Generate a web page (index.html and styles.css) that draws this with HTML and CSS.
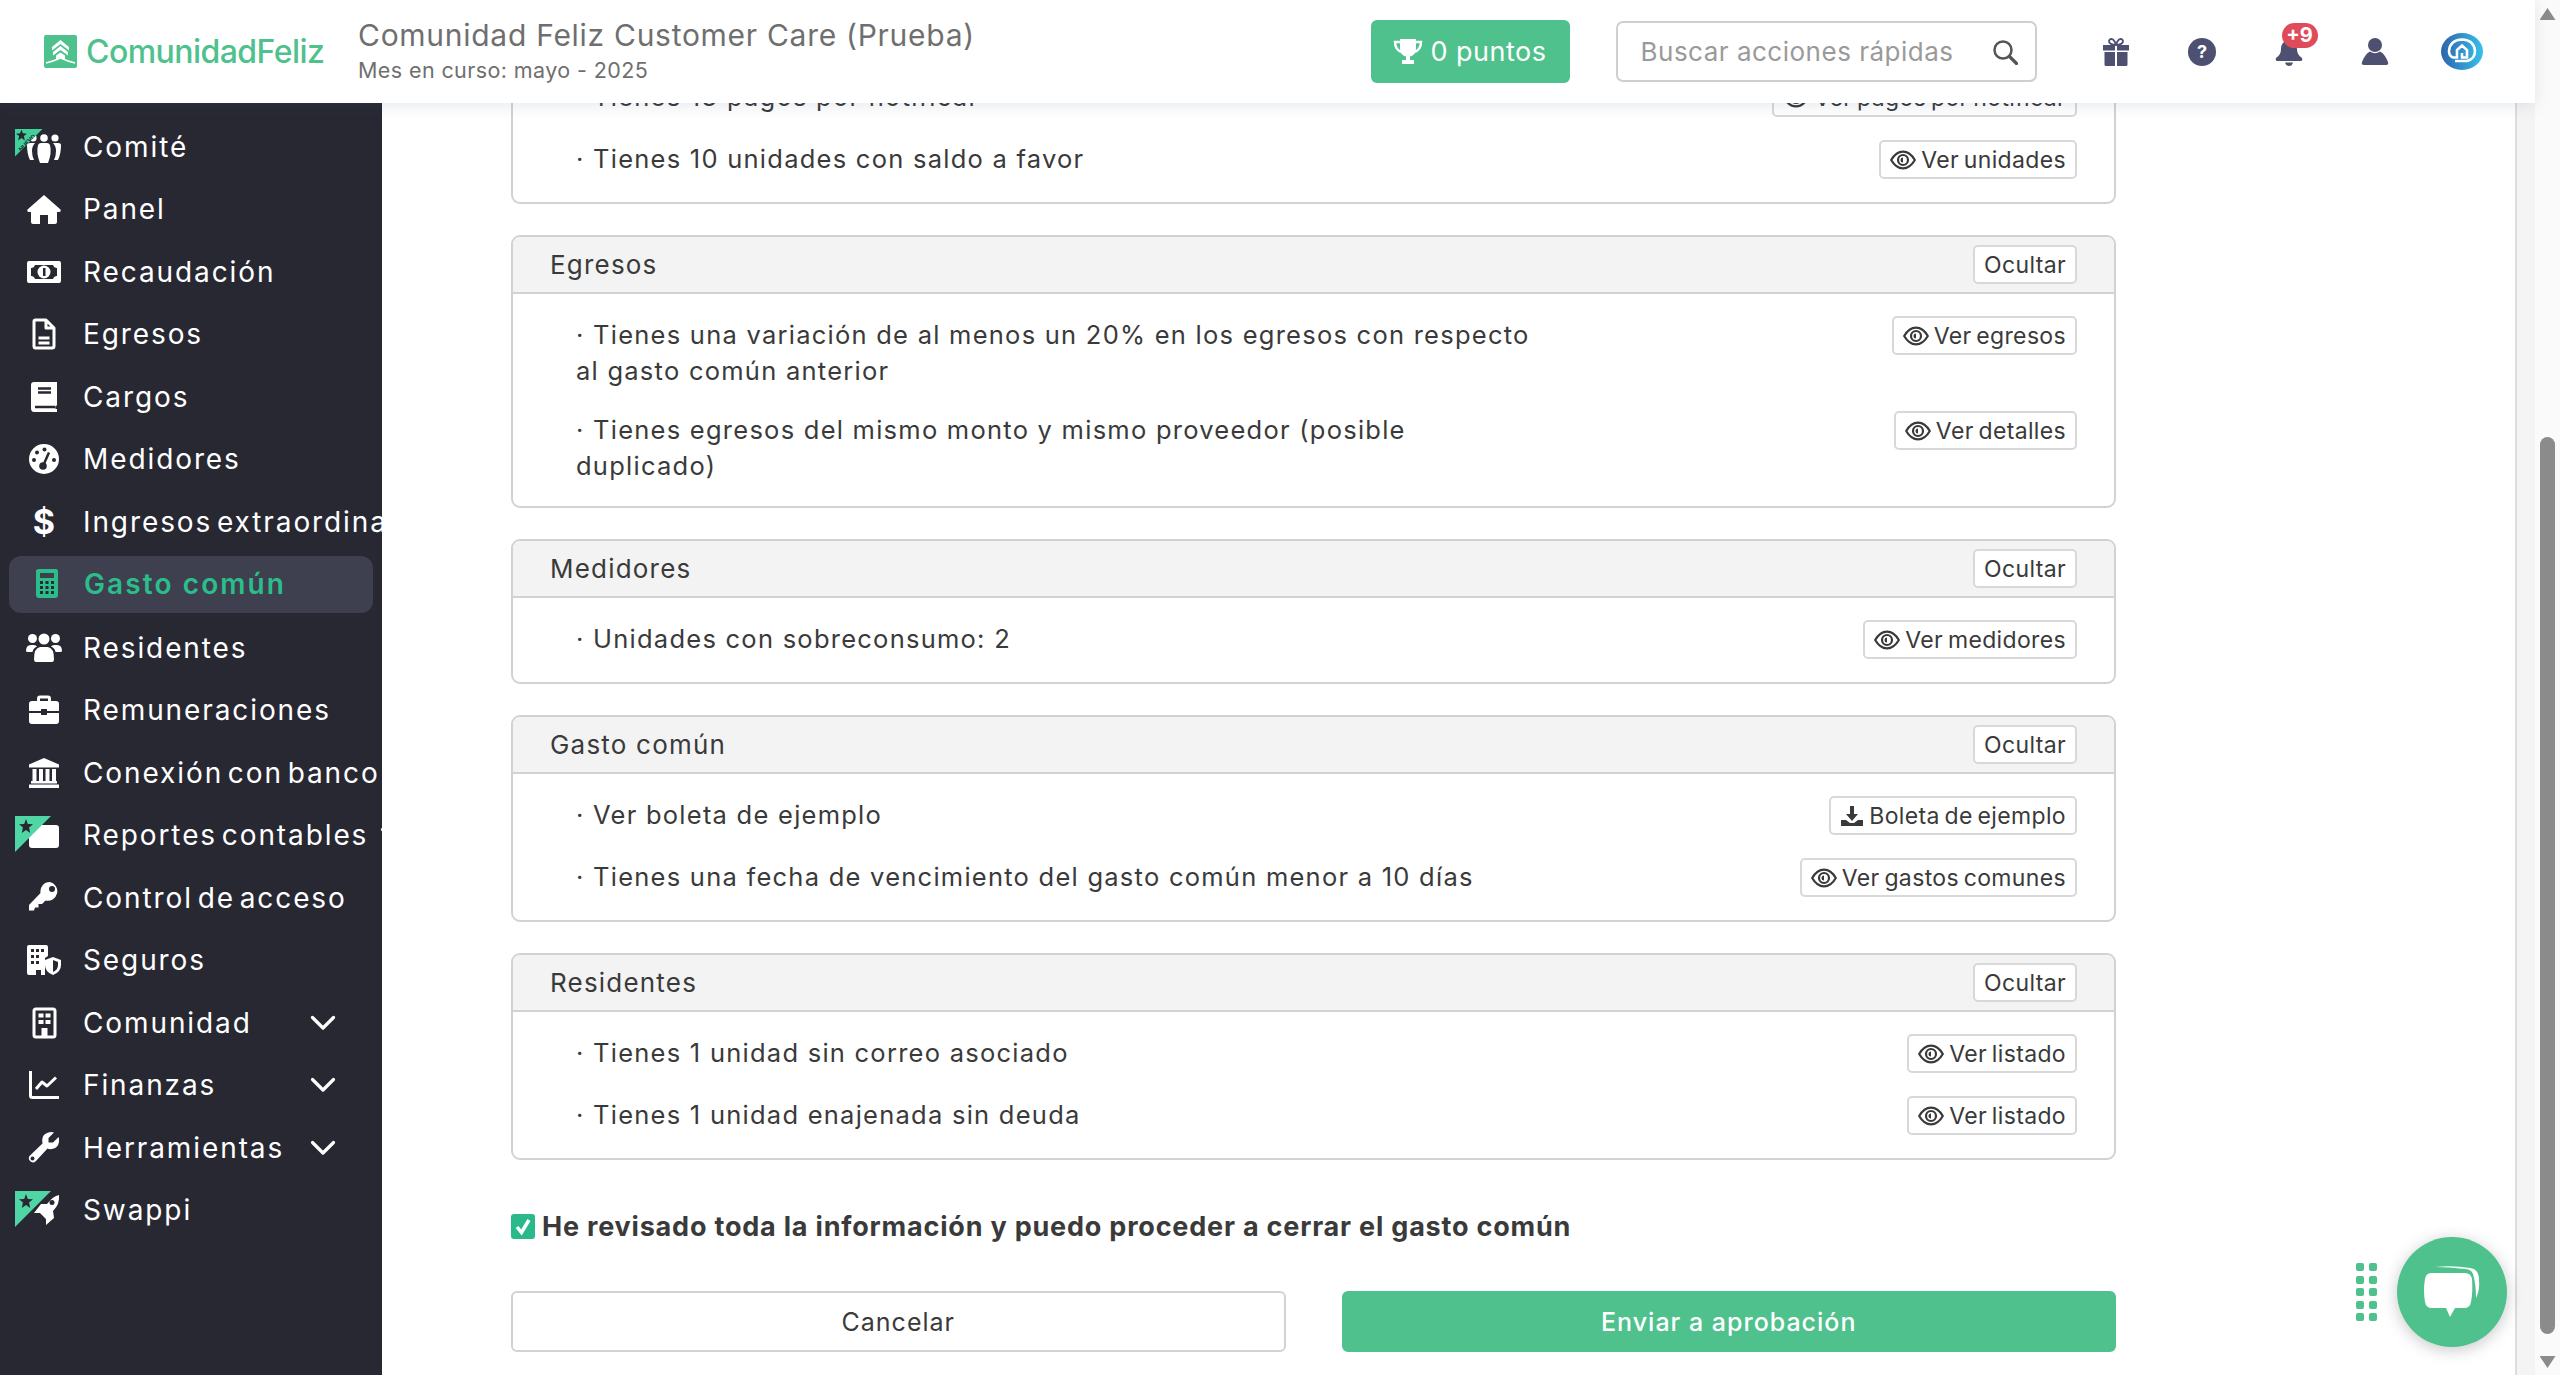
FILE: index.html
```html
<!DOCTYPE html>
<html lang="es">
<head>
<meta charset="utf-8">
<title>Comunidad Feliz</title>
<link rel="stylesheet" href="styles.css">
</head>
<body>
<svg class="defs" width="0" height="0" aria-hidden="true">
  <symbol id="i-comite" viewBox="0 0 36 32">
    <circle cx="7" cy="7" r="3.6"/><circle cx="18" cy="7" r="3.8"/><circle cx="29" cy="7" r="3.6"/>
    <path d="M1 14q0-2 3-2h5q-3 3-3 8 0 5 2 9H4q-3-6-3-15zM35 14q0-2-3-2h-5q3 3 3 8 0 5-2 9h4q3-6 3-15z"/>
    <path d="M12 14q1-2 3-2h6q2 0 3 2 2 8-2 18h-8q-4-10-2-18z"/>
  </symbol>
  <symbol id="i-home" viewBox="0 0 36 32">
    <path d="M18 2L34.500 16.500Q35.500 18.500 33 19H31V29Q31 31 29 31H22V22H14V31H7Q5 31 5 29V19H3Q.5 18.500 1.500 16.500Z"/>
  </symbol>
  <symbol id="i-money" viewBox="0 0 36 32">
    <path fill-rule="evenodd" d="M3 5H33Q35 5 35 7V25Q35 27 33 27H3Q1 27 1 25V7Q1 5 3 5ZM9 9Q8 12 5 12V20Q8 20 9 23H27Q28 20 31 20V12Q28 12 27 9Z"/>
    <circle cx="18" cy="16" r="6.500"/><rect class="dk" x="17" y="12" width="2.500" height="8"/>
  </symbol>
  <symbol id="i-file" viewBox="0 0 36 32">
    <path class="ln" d="M9.500 2H20L28 10V28Q28 30 26 30H9.500Q8 30 8 28V3.500Q8 2 9.500 2ZM20 2.500V10H27.500M12.500 20H23.500M12.500 25H23.500"/>
  </symbol>
  <symbol id="i-book" viewBox="0 0 36 32">
    <path d="M8 1H31V24Q30 25 29.500 26V28H31V31H8Q5 31 5 27V4Q5 1 8 1Z"/>
    <path class="dkln" d="M12 7.500H25M12 11.500H25M9 26H29.500"/>
  </symbol>
  <symbol id="i-gauge" viewBox="0 0 36 32">
    <circle cx="18" cy="16" r="15"/>
    <circle class="dk" cx="8" cy="17" r="2"/><circle class="dk" cx="11" cy="9.500" r="2"/><circle class="dk" cx="18.500" cy="6.500" r="2"/><circle class="dk" cx="28" cy="17" r="2"/>
    <circle class="dk" cx="17" cy="23" r="3.800"/><path class="dkln" d="M17 23L23 9.500"/>
  </symbol>
  <symbol id="i-calc" viewBox="0 0 36 32">
    <path fill-rule="evenodd" d="M12 1H29Q31 1 31 3V27Q31 30 28 30H12Q9 30 9 27V3Q9 1 12 1ZM13 5V10H27V5Z"/>
    <g class="dk"><rect x="13" y="13" width="3" height="3"/><rect x="18.500" y="13" width="3" height="3"/><rect x="24" y="13" width="3" height="3"/><rect x="13" y="18" width="3" height="3"/><rect x="18.500" y="18" width="3" height="3"/><rect x="24" y="18" width="3" height="3"/><rect x="13" y="23" width="3" height="3"/><rect x="18.500" y="23" width="3" height="3"/><rect x="24" y="23" width="3" height="3"/></g>
  </symbol>
  <symbol id="i-users" viewBox="0 0 36 32">
    <circle cx="6.500" cy="6.500" r="4.500"/><circle cx="29.500" cy="6.500" r="4.500"/><circle cx="18" cy="7" r="5.500"/>
    <path d="M0 19Q0 13 5 13H8Q10 13 11 14.500Q7 16 6.500 20H2Q0 20 0 19ZM36 19Q36 13 31 13H28Q26 13 25 14.500Q29 16 29.500 20H34Q36 20 36 19Z"/>
    <path d="M8 27Q8 16 14 15H22Q28 16 28 27Q28 30 26 30H10Q8 30 8 27Z"/>
  </symbol>
  <symbol id="i-case" viewBox="0 0 36 32">
    <path class="ln" d="M12.500 7V4.500Q12.500 3 14 3H22Q23.500 3 23.500 4.500V7"/>
    <path d="M6 7H30Q33 7 33 10V17H21V15H15V17H3V10Q3 7 6 7ZM3 19H15V21H21V19H33V27Q33 30 30 30H6Q3 30 3 27Z"/>
  </symbol>
  <symbol id="i-bank" viewBox="0 0 36 32">
    <path d="M18 1L33 7.500V10.500H3V7.500Z"/><rect x="6.500" y="12" width="4" height="12"/><rect x="13" y="12" width="4" height="12"/><rect x="19.500" y="12" width="4" height="12"/><rect x="26" y="12" width="4" height="12"/><rect x="5" y="24" width="26" height="2.500"/><rect x="3" y="27.500" width="30" height="3.500"/>
  </symbol>
  <symbol id="i-folder" viewBox="0 0 36 32">
    <rect x="3" y="6" width="30" height="23" rx="3"/>
  </symbol>
  <symbol id="i-key" viewBox="0 0 36 32">
    <path fill-rule="evenodd" d="M24 0A9.500 9.500 0 1 1 19.500 18.500L16 22H12.500V25.500H9L8 28.500H3V23L14.500 11A9.500 9.500 0 0 1 24 0ZM26 4A3 3 0 1 0 26 10 3 3 0 0 0 26 4Z"/>
  </symbol>
  <symbol id="i-shield" viewBox="0 0 36 32">
    <path d="M3 1H20Q22 1 22 3V12L19 14V31H15V26H10V31H3Q1 31 1 29V3Q1 1 3 1Z"/>
    <g class="dk"><rect x="5" y="5" width="3" height="3"/><rect x="10" y="5" width="3" height="3"/><rect x="15" y="5" width="3" height="3"/><rect x="5" y="11" width="3" height="3"/><rect x="10" y="11" width="3" height="3"/><rect x="5" y="17" width="3" height="3"/><rect x="10" y="17" width="3" height="3"/></g>
    <path d="M27 13L35 16V21Q35 28 27 31Q19 28 19 21V16Z"/><path class="dk" d="M27 16L32 18V21Q32 26 27 28Z"/>
  </symbol>
  <symbol id="i-building" viewBox="0 0 36 32">
    <rect class="ln" x="8" y="2" width="21" height="28" rx="2"/>
    <rect x="12.500" y="6.500" width="5" height="4"/><rect x="19.500" y="6.500" width="5" height="4"/><rect x="12.500" y="13" width="5" height="4"/><rect x="19.500" y="13" width="5" height="4"/><rect x="15.500" y="21" width="6" height="9"/>
  </symbol>
  <symbol id="i-chart" viewBox="0 0 36 32">
    <path class="ln" d="M4.500 2V26.500Q4.500 28.500 6.500 28.500H33"/><path class="ln" d="M10 20L16 13L21 17L30 8.500"/>
  </symbol>
  <symbol id="i-wrench" viewBox="0 0 36 32">
    <path fill-rule="evenodd" d="M25 0Q27 0 28 .5L22.500 6V10.500H27L32.500 5Q33.500 7 33 10Q32 16 26 17Q23 17.500 21.500 16.500L9.500 29.500Q6.500 31.500 4 29Q1.500 26 4 23.500L16.500 11.500Q15 4 20 1.500Q22 0 25 0ZM6.500 24.500A2 2 0 1 0 6.500 28.500 2 2 0 0 0 6.500 24.500Z"/>
  </symbol>
  <symbol id="i-rocket" viewBox="0 0 36 32">
    <path fill-rule="evenodd" d="M33 1Q34 10 27 17L28 24L20 31L20 25L14 19L8 19L15 10L21 10Q27 2 33 1ZM26 6A2.500 2.500 0 1 0 26 11 2.500 2.500 0 0 0 26 6Z"/>
  </symbol>
  <symbol id="i-eye" viewBox="0 0 26 20">
    <path d="M1.200 10Q6 1.600 13 1.600T24.800 10Q20 18.400 13 18.400T1.200 10Z" fill="none" stroke="currentColor" stroke-width="2.200"/>
    <circle cx="13" cy="10" r="5" fill="none" stroke="currentColor" stroke-width="2.200"/>
    <path d="M13 7.500A2.500 2.500 0 0 0 13 12.500Z" fill="currentColor"/>
  </symbol>
  <symbol id="i-chev" viewBox="0 0 26 16">
    <path d="M2.500 2.500L13 13L23.500 2.500" fill="none" stroke="currentColor" stroke-width="3.200" stroke-linecap="round" stroke-linejoin="round"/>
  </symbol>
</svg>

<div class="app">
  <div class="window">
    <header class="topbar">
      <div class="logo">
        <svg class="logo-mark" viewBox="0 0 33 33"><rect width="33" height="33" rx="2" fill="#4fc18d"/><path d="M16.500 5L25 12V15.500L16.500 9L8 15.500V12Z" fill="#fff"/><path d="M16.500 11L24 17V20.500L16.500 15L9 20.500V17Z" fill="#fff"/><path d="M12 20.500L16.500 17.500L21 20.500V24H12Z" fill="#fff"/><path d="M2 28Q10 26 16.500 23Q23 26 31 28" fill="none" stroke="#fff" stroke-width="1.400"/></svg>
        <span class="logo-text">ComunidadFeliz</span>
      </div>
      <div class="heading">
        <div class="heading-title">Comunidad Feliz Customer Care (Prueba)</div>
        <div class="heading-sub">Mes en curso: mayo - 2025</div>
      </div>
      <button class="points">
        <svg class="trophy" viewBox="0 0 30 28"><path d="M7 1H23V10Q23 17 17 18.500V22H21V26H9V22H13V18.500Q7 17 7 10Z" fill="#fff"/><path d="M7 4H2Q2 12 9 14M23 4H28Q28 12 21 14" fill="none" stroke="#fff" stroke-width="2.400"/></svg>
        <span>0 puntos</span>
      </button>
      <label class="search">
        <span class="search-text">Buscar acciones rápidas</span>
        <svg class="search-icon" viewBox="0 0 26 26"><circle cx="11" cy="11" r="8.500" fill="none" stroke="#555" stroke-width="2.500"/><path d="M17.500 17.500L24.500 24.500" stroke="#555" stroke-width="3.200" stroke-linecap="round"/></svg>
      </label>
      <div class="tools">
        <div class="tool"><svg class="tool-icon" viewBox="0 0 28 28"><path d="M1 7H13V12.500H1ZM15 7H27V12.500H15ZM2.500 14H13V28H4Q2.500 28 2.500 26.500ZM15 14H25.500V26.500Q25.500 28 24 28H15Z"/><path d="M14 7Q7 6.500 7 3Q8 0 11 1.500Q13 3 14 7Q15 3 17 1.500Q20 0 21 3Q21 6.500 14 7Z" fill="none" stroke="#4d5070" stroke-width="1.800"/></svg></div>
        <div class="tool"><svg class="tool-icon" viewBox="0 0 28 28"><circle cx="14" cy="14" r="14"/><text class="q" x="14" y="20" text-anchor="middle">?</text></svg></div>
        <div class="tool bell">
          <svg class="tool-icon" viewBox="0 0 28 28"><path d="M14 2Q22 3 22 11Q22 17 27 20Q28 23 25.500 23H2.500Q0 23 1 20Q6 17 6 11Q6 3 14 2Z"/><path d="M10 24.500H18Q17 28 14 28T10 24.500Z"/></svg>
          <span class="badge">+9</span>
        </div>
        <div class="tool"><svg class="tool-icon" viewBox="0 0 28 28"><circle cx="14" cy="7" r="7"/><path d="M9 13.500Q14 17 19 13.500Q24 16 27 24Q28 27 25 27H3Q0 27 1 24Q4 16 9 13.500Z"/></svg></div>
        <div class="tool"><svg class="brand" viewBox="0 0 42 37"><defs><linearGradient id="bg" x1="0" x2="1" y1="0" y2="0"><stop offset="0" stop-color="#2e63ae"/><stop offset="1" stop-color="#35c1ea"/></linearGradient></defs><ellipse cx="21" cy="18.500" rx="21" ry="18.500" fill="url(#bg)"/><path d="M14 28H26Q34 26 34 18Q33 7 21 6.500Q9 7 8 18Q8 23 12 24.500H16V17L21 12.500L26 17V24.500H21V20" fill="none" stroke="#fff" stroke-width="2.600"/></svg></div>
      </div>
    </header>

    <div class="workspace">
      <nav class="sidebar">
        <a class="nav-item"><span class="nav-icon"><svg><use href="#i-comite"/></svg><span class="ribbon ribbon-sm"><i>NUEVO</i></span></span><span class="nav-label">Comité</span></a>
        <a class="nav-item"><span class="nav-icon"><svg><use href="#i-home"/></svg></span><span class="nav-label">Panel</span></a>
        <a class="nav-item"><span class="nav-icon"><svg><use href="#i-money"/></svg></span><span class="nav-label">Recaudación</span></a>
        <a class="nav-item"><span class="nav-icon"><svg><use href="#i-file"/></svg></span><span class="nav-label">Egresos</span></a>
        <a class="nav-item"><span class="nav-icon"><svg><use href="#i-book"/></svg></span><span class="nav-label">Cargos</span></a>
        <a class="nav-item"><span class="nav-icon"><svg><use href="#i-gauge"/></svg></span><span class="nav-label">Medidores</span></a>
        <a class="nav-item"><span class="nav-icon nav-dollar">$</span><span class="nav-label">Ingresos extraordinarios</span></a>
        <a class="nav-item active"><span class="nav-icon"><svg><use href="#i-calc"/></svg></span><span class="nav-label">Gasto común</span></a>
        <a class="nav-item"><span class="nav-icon"><svg><use href="#i-users"/></svg></span><span class="nav-label">Residentes</span></a>
        <a class="nav-item"><span class="nav-icon"><svg><use href="#i-case"/></svg></span><span class="nav-label">Remuneraciones</span></a>
        <a class="nav-item"><span class="nav-icon"><svg><use href="#i-bank"/></svg></span><span class="nav-label">Conexión con banco</span></a>
        <a class="nav-item"><span class="nav-icon"><svg><use href="#i-folder"/></svg><span class="ribbon"></span></span><span class="nav-label">Reportes contables</span><svg class="chev chev-tight"><use href="#i-chev"/></svg></a>
        <a class="nav-item"><span class="nav-icon"><svg><use href="#i-key"/></svg></span><span class="nav-label">Control de acceso</span></a>
        <a class="nav-item"><span class="nav-icon"><svg><use href="#i-shield"/></svg></span><span class="nav-label">Seguros</span></a>
        <a class="nav-item"><span class="nav-icon"><svg><use href="#i-building"/></svg></span><span class="nav-label">Comunidad</span><svg class="chev"><use href="#i-chev"/></svg></a>
        <a class="nav-item"><span class="nav-icon"><svg><use href="#i-chart"/></svg></span><span class="nav-label">Finanzas</span><svg class="chev"><use href="#i-chev"/></svg></a>
        <a class="nav-item"><span class="nav-icon"><svg><use href="#i-wrench"/></svg></span><span class="nav-label">Herramientas</span><svg class="chev"><use href="#i-chev"/></svg></a>
        <a class="nav-item"><span class="nav-icon"><svg><use href="#i-rocket"/></svg><span class="ribbon"></span></span><span class="nav-label">Swappi</span></a>
      </nav>

      <main class="main">
        <div class="content">
          <section class="card card-cut">
            <div class="card-body">
              <div class="row"><p class="row-text">· Tienes 13 pagos por notificar</p><button class="btn"><svg class="eye"><use href="#i-eye"/></svg>Ver pagos por notificar</button></div>
              <div class="row"><p class="row-text">· Tienes 10 unidades con saldo a favor</p><button class="btn"><svg class="eye"><use href="#i-eye"/></svg>Ver unidades</button></div>
            </div>
          </section>

          <section class="card">
            <div class="card-head"><h3>Egresos</h3><button class="btn">Ocultar</button></div>
            <div class="card-body">
              <div class="row"><p class="row-text">· Tienes una variación de al menos un 20% en los egresos con respecto<br>al gasto común anterior</p><button class="btn"><svg class="eye"><use href="#i-eye"/></svg>Ver egresos</button></div>
              <div class="row"><p class="row-text">· Tienes egresos del mismo monto y mismo proveedor (posible<br>duplicado)</p><button class="btn"><svg class="eye"><use href="#i-eye"/></svg>Ver detalles</button></div>
            </div>
          </section>

          <section class="card">
            <div class="card-head"><h3>Medidores</h3><button class="btn">Ocultar</button></div>
            <div class="card-body">
              <div class="row"><p class="row-text">· Unidades con sobreconsumo: 2</p><button class="btn"><svg class="eye"><use href="#i-eye"/></svg>Ver medidores</button></div>
            </div>
          </section>

          <section class="card">
            <div class="card-head"><h3>Gasto común</h3><button class="btn">Ocultar</button></div>
            <div class="card-body">
              <div class="row"><p class="row-text">· Ver boleta de ejemplo</p><button class="btn"><svg class="dl" viewBox="0 0 24 22"><path d="M10 1H14V9H18L12 16L6 9H10Z" fill="currentColor"/><path d="M1 15H6L10 18H14L18 15H23V21H1Z" fill="currentColor"/></svg>Boleta de ejemplo</button></div>
              <div class="row"><p class="row-text">· Tienes una fecha de vencimiento del gasto común menor a 10 días</p><button class="btn"><svg class="eye"><use href="#i-eye"/></svg>Ver gastos comunes</button></div>
            </div>
          </section>

          <section class="card">
            <div class="card-head"><h3>Residentes</h3><button class="btn">Ocultar</button></div>
            <div class="card-body">
              <div class="row"><p class="row-text">· Tienes 1 unidad sin correo asociado</p><button class="btn"><svg class="eye"><use href="#i-eye"/></svg>Ver listado</button></div>
              <div class="row"><p class="row-text">· Tienes 1 unidad enajenada sin deuda</p><button class="btn"><svg class="eye"><use href="#i-eye"/></svg>Ver listado</button></div>
            </div>
          </section>

          <label class="confirm">
            <span class="check"><svg viewBox="0 0 24 24"><path d="M6 12.500L10.500 18L18 5.500" fill="none" stroke="#fff" stroke-width="3.500"/></svg></span>
            <span class="confirm-text">He revisado toda la información y puedo proceder a cerrar el gasto común</span>
          </label>

          <div class="actions">
            <button class="action">Cancelar</button>
            <button class="action action-primary">Enviar a aprobación</button>
          </div>
        </div>
      </main>
      <div class="rail"></div>
    </div>

    <div class="chat">
      <div class="grip"><i></i><i></i><i></i><i></i><i></i><i></i><i></i><i></i><i></i><i></i></div>
      <div class="chat-button">
        <svg viewBox="0 0 58 56"><path d="M12 3Q30 1 47 4Q56 5 56 16Q57 26 53 34Q53 20 50 10Q48 5 42 5Q26 3 12 3Z" fill="#fff"/><path d="M8 9H42Q48 9 49 15Q50 28 48 38Q47 44 41 44H32L27 53L23 44H9Q3 44 2 38Q0 26 2 15Q3 9 8 9Z" fill="#fff"/></svg>
      </div>
    </div>
  </div>

  <aside class="scrollbar">
    <span class="arrow arrow-up"></span>
    <span class="thumb"></span>
    <span class="arrow arrow-down"></span>
  </aside>
</div>
</body>
</html>
```
FILE: styles.css
```css
* { box-sizing: border-box; }
html, body { margin: 0; height: 100%; }
body {
  width: 2560px;
  height: 1375px;
  overflow: hidden;
  background: #fff;
  color: #3a3a3a;
  font-family: Inter, "Liberation Sans", sans-serif;
}
.defs { position: absolute; }
button { font-family: inherit; cursor: pointer; }

.app { display: flex; height: 100%; }
.window { position: relative; flex: 1; min-width: 0; display: flex; flex-direction: column; height: 100%; }

/* Header */
.topbar {
  position: relative;
  z-index: 2;
  flex: 0 0 103px;
  display: flex;
  align-items: center;
  padding-left: 44px;
  padding-right: 30px;
  background: #fff;
  box-shadow: 0 3px 14px rgba(70, 85, 130, .13);
}
.logo { display: flex; align-items: center; gap: 9px; width: 314px; }
.logo-mark { width: 33px; height: 33px; flex: none; }
.logo-text { color: #4fc18d; font-size: 32px; font-weight: 500; letter-spacing: -.55px; white-space: nowrap; }
.heading { flex: 1; min-width: 0; color: #6f6f6f; }
.heading-title { font-size: 30px; line-height: 36px; letter-spacing: .72px; white-space: nowrap; margin-top: -2px; }
.heading-sub { font-size: 21.500px; line-height: 28px; letter-spacing: .4px; margin-top: 3px; white-space: nowrap; }
.points {
  width: 199px; height: 63px; flex: none;
  display: flex; align-items: center; justify-content: center; gap: 7px;
  background: #4fc18d; border: 0; border-radius: 6px; color: #fff;
  font-size: 27px; letter-spacing: .5px;
}
.trophy { width: 30px; height: 28px; }
.search {
  width: 421px; height: 61px; flex: none; margin-left: 46px;
  display: flex; align-items: center; justify-content: space-between;
  padding: 0 17px 0 23px;
  border: 2px solid #cfcfcf; border-radius: 7px;
}
.search-text { font-size: 26px; color: #9a9a9a; letter-spacing: .5px; white-space: nowrap; }
.search-icon { width: 26px; height: 26px; }
.tools { display: flex; margin-left: 36px; }
.tool { position: relative; width: 86.500px; display: flex; justify-content: center; align-items: center; }
.tool-icon { width: 28px; height: 28px; fill: #4d5070; }
.q { fill: #fff; font-size: 18px; font-weight: 700; }
.badge {
  position: absolute; left: 36px; top: -10px;
  width: 36px; height: 25px; border-radius: 13px;
  background: #e04b5a; color: #fff;
  font-size: 20px; font-weight: 700; line-height: 25px; text-align: center;
}
.brand { width: 42px; height: 37px; }

/* Layout */
.workspace { flex: 1; min-height: 0; display: flex; }
.sidebar {
  flex: 0 0 382px;
  padding: 15px 9px 0;
  background: #282833;
  overflow: hidden;
}
.nav-item {
  display: flex; align-items: center;
  width: 364px; height: 57px;
  margin-bottom: 5.500px;
  padding-left: 17px;
  border-radius: 12px;
  color: #fff;
}
.nav-icon { position: relative; flex: none; width: 36px; height: 32px; margin-right: 21px; fill: #fff; }
.nav-icon svg { display: block; width: 36px; height: 32px; }
.nav-dollar { font-size: 34px; font-weight: 700; line-height: 32px; text-align: center; }
.dk { fill: #282833; }
.ln { fill: none; stroke: #fff; stroke-width: 3; stroke-linejoin: round; }
.dkln { fill: none; stroke: #282833; stroke-width: 2.500; }
.nav-label { flex: none; font-size: 28px; letter-spacing: 1.9px; word-spacing: -5px; white-space: nowrap; }
.active { margin-top: 1px; margin-bottom: 6.500px; padding-left: 18px; background: #3e3f4f; color: #2bbd8a; }
.active .nav-icon { fill: #2bbd8a; }
.active .dk { fill: #3e3f4f; }
.active .nav-label { font-weight: 600; letter-spacing: 2.100px; word-spacing: 0; }
.chev { flex: none; width: 26px; height: 16px; margin-left: auto; margin-right: 37px; color: #fff; }
.chev-tight { margin-left: 12px; margin-right: 0; }
.ribbon {
  position: absolute; left: -11px; top: -3px;
  width: 36px; height: 36px;
  background: #4fd6a4;
  clip-path: polygon(0 0, 100% 0, 0 100%);
}
.ribbon::before {
  content: "";
  position: absolute; left: 4px; top: 3px;
  width: 14px; height: 14px;
  background: #282833;
  clip-path: polygon(50% 0, 63% 35%, 100% 38%, 72% 60%, 80% 100%, 50% 78%, 20% 100%, 28% 60%, 0 38%, 37% 35%);
}
.ribbon-sm { left: -11px; top: -2px; width: 28px; height: 28px; background: #3fd09b; }
.ribbon-sm::before { left: 1px; top: 1px; width: 11px; height: 11px; }
.ribbon-sm i {
  position: absolute; left: -1px; top: 10px; width: 26px;
  color: #282833; font-size: 6px; font-style: normal; font-weight: 700;
  text-align: center; transform: rotate(-45deg);
}

/* Main */
.main { flex: 1; min-width: 0; overflow: hidden; }
.content { width: 1605px; margin-left: 129px; margin-top: -47px; }
.card {
  margin-bottom: 31px;
  border: 2px solid #d2d2d2;
  border-radius: 9px;
  background: #fff;
  overflow: hidden;
}
.card-cut { border-top: 0; }
.card-head {
  display: flex; align-items: center; justify-content: space-between;
  height: 57px;
  padding: 0 37px 0 37px;
  background: #f3f3f3;
  border-bottom: 2px solid #d2d2d2;
}
.card-head h3 { margin: 0; font-size: 26px; font-weight: 400; letter-spacing: 1.2px; color: #3a3a3a; }
.card-body { padding: 22px 37px 0 64px; }
.row { display: flex; justify-content: space-between; align-items: flex-start; padding-bottom: 23px; }
.row-text { margin: 1px 0 -1px -1px; font-size: 25.500px; line-height: 36px; letter-spacing: 1.250px; white-space: nowrap; color: #3a3a3a; }
.btn {
  display: inline-flex; align-items: center; gap: 5px;
  height: 39px; padding: 1px 9px 0;
  background: #fff; color: #3a3a3a;
  border: 2px solid #d8d8d8; border-radius: 5px;
  font-size: 23px; letter-spacing: .35px; word-spacing: -2px; white-space: nowrap;
}
.eye { width: 26px; height: 20px; flex: none; }
.dl { width: 24px; height: 22px; flex: none; }

/* Footer form */
.confirm { display: flex; align-items: center; gap: 7px; margin-top: 54px; height: 25px; }
.check { flex: none; width: 24px; height: 25px; border-radius: 3px; background: #2ab98a; }
.check svg { display: block; width: 24px; height: 25px; }
.confirm-text { font-size: 27px; font-weight: 700; letter-spacing: .8px; white-space: nowrap; }
.actions { display: flex; gap: 56px; margin-top: 52px; }
.action {
  flex: 1; height: 61px;
  background: #fff; color: #3a3a3a;
  border: 2px solid #d2d2d2; border-radius: 6px;
  font-size: 25px; letter-spacing: 1px;
}
.action-primary { background: #4fc18d; border-color: #4fc18d; color: #fff; font-weight: 500; }

/* Right rail and browser scrollbar */
.rail { flex: 0 0 20px; border-left: 2px solid #dcdcdc; background: #f4f4f4; }
.scrollbar {
  flex: 0 0 25px;
  display: flex; flex-direction: column; align-items: center;
  background: #fafafa;
}
.arrow { flex: none; width: 16px; height: 12px; background: #8b8b8b; }
.arrow-up { margin-top: 8px; clip-path: polygon(50% 0, 100% 100%, 0 100%); }
.arrow-down { margin-top: auto; margin-bottom: 7px; clip-path: polygon(0 0, 100% 0, 50% 100%); }
.thumb { flex: none; width: 15px; height: 897px; margin-top: 417px; border-radius: 8px; background: #8b8b8b; }

/* Floating chat */
.chat { position: absolute; right: 28px; bottom: 28px; display: flex; align-items: center; gap: 20px; z-index: 1; }
.grip { display: grid; grid-template-columns: 8px 8px; grid-auto-rows: 8px; gap: 4.500px 5px; }
.grip i { background: #4fc18d; border-radius: 2px; }
.chat-button {
  width: 110px; height: 110px; border-radius: 50%;
  display: flex; align-items: center; justify-content: center;
  background: #4fc18d;
  box-shadow: 0 3px 16px rgba(0, 0, 0, .22);
}
.chat-button svg { width: 58px; height: 56px; }
```
